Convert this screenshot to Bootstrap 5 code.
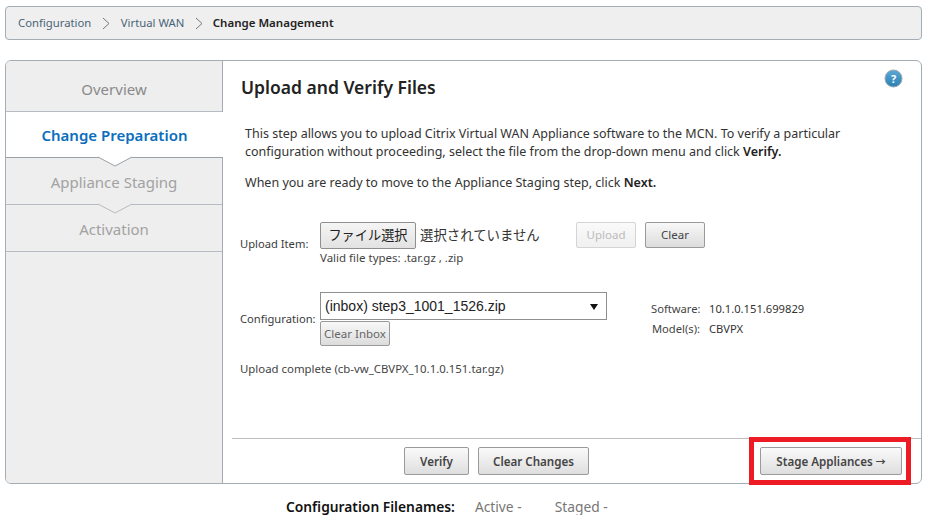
<!DOCTYPE html>
<html lang="en">
<head>
<meta charset="utf-8">
<title>Change Management</title>
<link href="https://cdn.jsdelivr.net/npm/bootstrap@5.3.0/dist/css/bootstrap.min.css" rel="stylesheet">
<style>
body{font-family:"Noto Sans","Noto Sans CJK JP",sans-serif;font-size:12.5px;color:#333;background:#fff;padding:6px 7px 0 5px;line-height:1.25}
.crumbs{height:34px;background:#efefef;border:1px solid #a4adb5;border-radius:4px;padding:0 12px;font-size:11.3px;margin-bottom:20px}
.crumbs a{color:#4b6477;text-decoration:none}
.crumbs b{font-weight:600;color:#222;font-size:11.5px;margin-left:-1px}
.crumb-sep{width:8px;height:13px;margin:0 11px 0 10.5px}
.shell{height:424px;border:1px solid #a4adb5;border-radius:6px;background:#fff}
.rail{width:217px;flex:none;background:#eee;border-right:1px solid #a4adb5;border-radius:5px 0 0 5px}
.step{position:relative;text-align:center;font-size:15px;color:#a2a2a2;border-bottom:1px solid #b6bcc1;height:47px;padding-top:15px}
.step:first-child{height:51px;padding-top:19px;color:#8a8a8a;border-top-left-radius:5px}
.step.now{height:46px;background:#fff;color:#0a6ebd;font-weight:600;padding-top:14px;border-bottom-color:#9aa1a7;margin-right:-1px}
.notch{position:absolute;left:92px;bottom:-10px;width:34px;height:10px;overflow:visible}
.body-pane{min-width:0;position:relative}
.body-inner{padding:14px 0 0 9px}
.ttl{font-size:17.5px;font-weight:600;color:#222;margin:0 0 26px 9px;line-height:24px}
.intro{margin:0 0 13px 5px;line-height:18px;width:620px}
.intro b{font-weight:600;color:#222}
.lab{width:80px;flex:none;color:#3a3a3a;font-size:11.2px}
.gbtn{border:1px solid #9a9a9a;border-radius:2px;background:linear-gradient(#f8f8f8,#dcdcdc);color:#444;font-size:11.5px;padding:0;height:26px;box-shadow:none}
.gbtn:disabled{opacity:1;color:#bbb;border-color:#d4d4d4;background:linear-gradient(#fafafa,#f0f0f0)}
.pick{width:96px;height:27px;font-size:13.2px;color:#222;border-color:#8f8f8f;background:linear-gradient(#f5f5f5,#e2e2e2)}
.upl{margin-top:30px;height:48px}
.upl .lab{padding-top:15px}
.nofile{font-size:13.4px;margin-left:4px;width:156px;color:#333;white-space:nowrap;line-height:27px}
.hint{font-size:11.5px;margin-top:2px;color:#444}
.cfg{margin-top:22px}
.cfg .lab{padding-top:20px}
.sel{width:287px;height:28px;border:1px solid #8f8f8f;background:#fff;padding:2px 8px 0 4px;font-family:"Liberation Sans",sans-serif;font-size:14px;color:#222}
.tri{width:0;height:0;border-left:4px solid transparent;border-right:4px solid transparent;border-top:6px solid #111}
.inb{width:70px;height:25px;margin-top:1px;display:block;color:#666}
.meta{margin-left:44px;padding-top:6.5px;font-size:11.2px;line-height:20px}
.meta-k{display:inline-block;width:58px;color:#444}
.meta-m{display:inline-block;width:49px;text-align:right;margin-right:9px;color:#444}
.done{margin-top:16px;font-size:11.4px;color:#444}
.foot{height:45px;border-top:1px solid #bdbdbd;padding:8px 19px 0 172px;margin-left:9px}
.foot .gbtn{font-weight:600;height:28px;color:#444;font-size:11.6px;padding-top:1px;background:linear-gradient(#fafafa,#dedede)}
.arr{font-size:10px}
.redbox{position:absolute;right:10px;bottom:-2px;width:162px;height:48px;border:5px solid #ed1c24;pointer-events:none}
.help{position:absolute;top:8px;right:18px;width:19px;height:19px}
.fnames{font-size:13.8px;margin-top:14px;padding-left:281px;color:#777}
.fnames b{font-weight:600;color:#111;margin-right:20px}
.fnames span{margin-right:33px}
</style>
</head>
<body>
<nav class="crumbs d-flex align-items-center">
  <a href="#">Configuration</a>
  <svg class="crumb-sep" viewBox="0 0 8 13"><path d="M1 1l6 5.5-6 5.5" fill="none" stroke="#777" stroke-width="1"/></svg>
  <a href="#">Virtual WAN</a>
  <svg class="crumb-sep" viewBox="0 0 8 13"><path d="M1 1l6 5.5-6 5.5" fill="none" stroke="#777" stroke-width="1"/></svg>
  <b>Change Management</b>
</nav>
<div class="shell d-flex">
  <div class="rail">
    <div class="step">Overview</div>
    <div class="step now">Change Preparation
      <svg class="notch" viewBox="0 0 34 10"><path d="M0 0L17 9 34 0Z" fill="#fff"/><path d="M0 0L17 9 34 0" fill="none" stroke="#9aa1a7"/></svg>
    </div>
    <div class="step">Appliance Staging
      <svg class="notch" viewBox="0 0 34 10"><path d="M0 0L17 9 34 0Z" fill="#eee"/><path d="M0 0L17 9 34 0" fill="none" stroke="#b6bcc1"/></svg>
    </div>
    <div class="step">Activation</div>
  </div>
  <div class="body-pane flex-grow-1 d-flex flex-column">
    <svg class="help" viewBox="0 0 19 19"><defs><linearGradient id="hg" x1="0" y1="0" x2="0" y2="1"><stop offset="0" stop-color="#5ba9d6"/><stop offset="1" stop-color="#2a7fb3"/></linearGradient></defs><circle cx="9.5" cy="9.5" r="8.5" fill="url(#hg)" stroke="#9aa6ad"/><text x="9.5" y="13.5" text-anchor="middle" fill="#fff" font-size="11" font-weight="700" font-family="Noto Sans">?</text></svg>
    <div class="body-inner flex-grow-1">
      <h1 class="ttl">Upload and Verify Files</h1>
      <div class="ms-2">
        <p class="intro">This step allows you to upload Citrix Virtual WAN Appliance software to the MCN. To verify a particular configuration without proceeding, select the file from the drop-down menu and click <b>Verify.</b></p>
        <p class="intro">When you are ready to move to the Appliance Staging step, click <b>Next.</b></p>
        <div class="upl d-flex">
          <div class="lab">Upload Item:</div>
          <div>
            <div class="d-flex align-items-start">
              <button type="button" class="btn gbtn pick">ファイル選択</button>
              <span class="nofile">選択されていません</span>
              <button type="button" class="btn gbtn" style="width:60px" disabled>Upload</button>
              <button type="button" class="btn gbtn" style="width:60px;margin-left:9px">Clear</button>
            </div>
            <div class="hint">Valid file types: .tar.gz , .zip</div>
          </div>
        </div>
        <div class="cfg d-flex">
          <div class="lab">Configuration:</div>
          <div>
            <div class="sel d-flex align-items-center justify-content-between"><span>(inbox) step3_1001_1526.zip</span><i class="tri"></i></div>
            <button type="button" class="btn gbtn inb">Clear Inbox</button>
          </div>
          <div class="meta">
            <div><span class="meta-k">Software:</span>10.1.0.151.699829</div>
            <div><span class="meta-m">Model(s):</span>CBVPX</div>
          </div>
        </div>
        <div class="done">Upload complete (cb-vw_CBVPX_10.1.0.151.tar.gz)</div>
      </div>
    </div>
    <div class="foot d-flex">
      <button type="button" class="btn gbtn" style="width:65px">Verify</button>
      <button type="button" class="btn gbtn" style="width:111px;margin-left:9px">Clear Changes</button>
      <button type="button" class="btn gbtn ms-auto" style="width:142px">Stage Appliances <span class="arr">→</span></button>
    </div>
    <div class="redbox"></div>
  </div>
</div>
<div class="fnames text-nowrap"><b>Configuration Filenames:</b><span>Active -</span><span>Staged -</span></div>
</body>
</html>
